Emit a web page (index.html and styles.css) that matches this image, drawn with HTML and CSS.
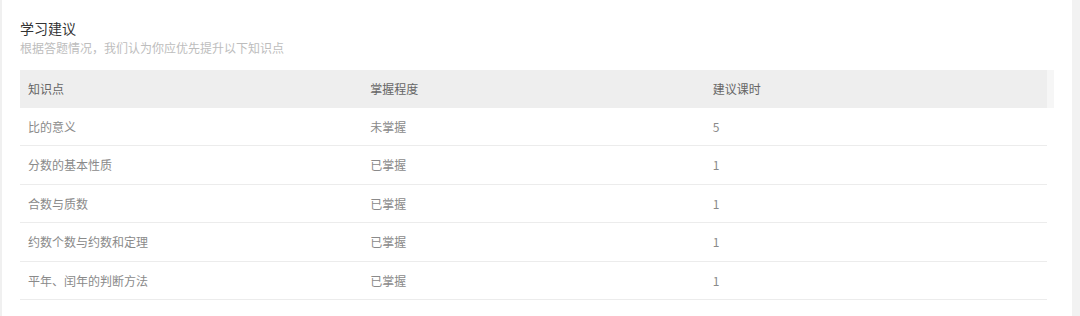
FILE: index.html
```html
<!DOCTYPE html>
<html lang="zh-CN">
<head>
<meta charset="utf-8">
<title>学习建议</title>
<link rel="stylesheet" href="styles.css">
</head>
<body>
<div class="page">
  <div class="edge-left"></div>
  <main class="main">
    <h2 class="title">学习建议</h2>
    <p class="subtitle">根据答题情况，我们认为你应优先提升以下知识点</p>
    <div class="head-wrap">
      <table class="table head">
        <colgroup><col class="c1"><col class="c2"><col class="c3"></colgroup>
        <thead>
          <tr><th>知识点</th><th>掌握程度</th><th>建议课时</th></tr>
        </thead>
      </table>
      <div class="gutter"></div>
    </div>
    <table class="table body">
      <colgroup><col class="c1"><col class="c2"><col class="c3"></colgroup>
      <tbody>
        <tr><td>比的意义</td><td>未掌握</td><td>5</td></tr>
        <tr><td>分数的基本性质</td><td>已掌握</td><td>1</td></tr>
        <tr><td>合数与质数</td><td>已掌握</td><td>1</td></tr>
        <tr><td>约数个数与约数和定理</td><td>已掌握</td><td>1</td></tr>
        <tr><td>平年、闰年的判断方法</td><td>已掌握</td><td>1</td></tr>
      </tbody>
    </table>
  </main>
  <div class="edge-right"></div>
</div>
</body>
</html>
```
FILE: styles.css
```css
html, body {
  margin: 0;
  padding: 0;
  background: #ffffff;
}
body {
  font-family: "Noto Sans CJK SC", "Noto Sans", "Liberation Sans", sans-serif;
  color: #888888;
}
.page {
  display: flex;
  width: 1080px;
  height: 316px;
  overflow: hidden;
}
.edge-left {
  width: 2px;
  background: #f0f0f0;
  flex: none;
}
.edge-right {
  width: 8px;
  background: #f2f2f2;
  flex: none;
}
.main {
  flex: 1;
  padding: 18px 0 0 18px;
  background: #ffffff;
}
.title {
  margin: 0;
  font-size: 14px;
  line-height: 20px;
  font-weight: 400;
  color: #333333;
}
.subtitle {
  margin: 1px 0 0 0;
  font-size: 12px;
  line-height: 18px;
  color: #bdbdbd;
}
.head-wrap {
  display: flex;
  margin-top: 13px;
  width: 1034px;
}
.gutter {
  width: 7px;
  background: #f6f6f6;
}
.table {
  width: 1027px;
  border-collapse: collapse;
  table-layout: fixed;
  font-size: 12px;
}
.c1, .c2, .c3 {
  width: 33.333%;
}
.head th {
  background: #eeeeee;
  height: 38px;
  padding: 0 8px;
  text-align: left;
  font-weight: 400;
  color: #666666;
  line-height: 18px;
}
.body td {
  padding: 10px 8px 10px 8px;
  line-height: 17.4px;
  color: #8a8a8a;
  border-bottom: 1px solid #ececec;
}
```
